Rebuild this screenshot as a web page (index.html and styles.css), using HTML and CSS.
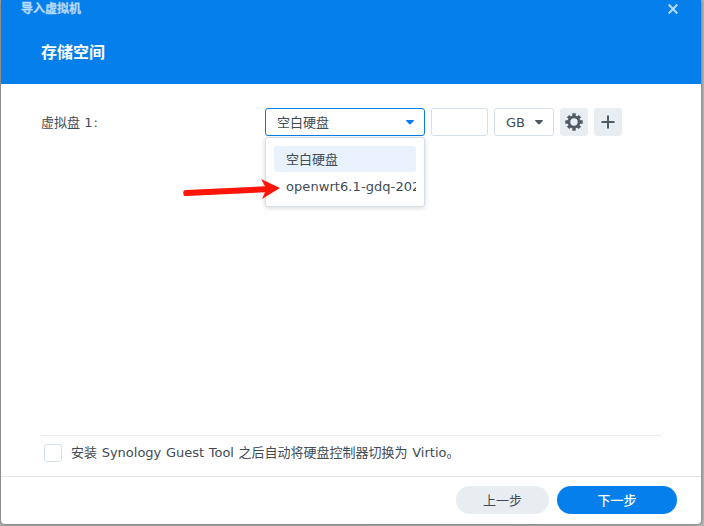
FILE: index.html
```html
<!DOCTYPE html>
<html lang="zh-CN">
<head>
<meta charset="utf-8">
<title>导入虚拟机</title>
<link rel="stylesheet" href="styles.css">
</head>
<body>
<div class="window">
  <header class="header">
    <div class="titlebar">
      <span class="window-title">导入虚拟机</span>
      <svg class="close" width="12" height="12" viewBox="0 0 12 12"><path d="M1.7 1.5 10.3 10.5M10.3 1.5 1.7 10.5"/></svg>
    </div>
    <h1 class="step-title">存储空间</h1>
  </header>
  <main class="content">
    <div class="disk-row">
      <label class="disk-label">虚拟盘 1<span class="colon">:</span></label>
      <div class="combo disk-combo">
        <span>空白硬盘</span>
        <svg class="caret" width="8" height="5" viewBox="0 0 8 5"><path d="M.3 0h7.400q.5.500 0 1L5 3.900Q4 4.800 3 3.900L.3 1Q-.2.500.3 0Z"/></svg>
        <ul class="menu">
          <li class="option selected">空白硬盘</li>
          <li class="option file-name">openwrt6.1-gdq-2024</li>
        </ul>
      </div>
      <div class="size-input"></div>
      <div class="combo unit-combo">
        <span>GB</span>
        <svg class="caret" width="8" height="5" viewBox="0 0 8 5"><path d="M.3 0h7.400q.5.500 0 1L5 3.900Q4 4.800 3 3.900L.3 1Q-.2.500.3 0Z"/></svg>
      </div>
      <div class="icon-button">
        <svg width="18" height="18" viewBox="-9 -9 18 18">
          <circle class="gear-ring" r="5.100"/>
          <path class="gear-teeth" d="M0-6V-8.700M0 6V8.700M-6 0H-8.700M6 0H8.700M4.100-4.100 5.900-5.900M-4.100-4.100-5.900-5.900M4.100 4.100 5.900 5.900M-4.100 4.100-5.900 5.900"/>
        </svg>
      </div>
      <div class="icon-button">
        <svg width="14" height="14" viewBox="0 0 14 14"><path class="plus" d="M7 .5v13M.5 7h13"/></svg>
      </div>
    </div>
    <div class="option-row">
      <span class="checkbox"></span>
      <span class="option-text">安装 Synology Guest Tool 之后自动将硬盘控制器切换为 Virtio。</span>
    </div>
  </main>
  <footer class="footer">
    <div class="button back">上一步</div>
    <div class="button next">下一步</div>
  </footer>
</div>
<svg class="pointer-arrow" width="100" height="24" viewBox="0 0 100 24">
  <path class="shaft" d="M4.200 15 84 11.200"/>
  <path d="M79 1 98 10 80 21 84.500 11Z"/>
</svg>
</body>
</html>
```
FILE: styles.css
```css
* { box-sizing: border-box; }
body {
  margin: 0;
  height: 526px;
  overflow: hidden;
  padding: 0 3px 2px 1px;
  background: linear-gradient(90deg, #b3b3b3 0 50%, #bababa);
  font: 13px/20px "DejaVu Sans", "Noto Sans CJK SC", sans-serif;
  color: #414b55;
}
.window {
  height: 524px;
  display: flex;
  flex-direction: column;
  background: #fff;
  border-radius: 0 0 4px 4px;
  box-shadow: 0 0 4px rgba(0, 0, 0, .5);
}
.header { height: 84px; background: #057feb; color: #fff; }
.titlebar {
  display: flex;
  justify-content: space-between;
  height: 20px;
  padding: 0 22px 0 20px;
  color: #b4d9f9;
}
.window-title { font-size: 12px; line-height: 18px; font-weight: 700; -webkit-text-stroke: .3px #b4d9f9; }
.close { margin-top: 3px; fill: none; stroke: #b4d9f9; stroke-width: 2; }
.step-title { margin: 21px 0 0 40px; font-size: 16px; line-height: 24px; font-weight: 700; }
.content {
  flex: 1;
  display: flex;
  flex-direction: column;
  justify-content: space-between;
  padding: 24px 40px 0;
}
.disk-row { display: flex; height: 28px; align-items: center; }
.disk-label { width: 224px; padding-top: 2px; }
.colon { margin-left: 1px; }
.combo {
  position: relative;
  display: flex;
  align-items: center;
  justify-content: space-between;
  height: 28px;
  padding: 0 10px 0 11px;
  border: 1px solid #d4dfe9;
  border-radius: 3px;
}
.combo > span { padding-top: 2px; }
.disk-combo { width: 160px; margin-right: 6px; border-color: #057feb; }
.disk-combo > .caret { fill: #057feb; }
.unit-combo { width: 60px; margin: 0 6px; }
.caret { fill: #505a64; }
.size-input { width: 57px; height: 28px; border: 1px solid #d4dfe9; border-radius: 3px; }
.icon-button {
  display: grid;
  place-items: center;
  width: 28px;
  height: 28px;
  margin-right: 6px;
  border-radius: 3px;
  background: #e8edf2;
}
.gear-ring { fill: none; stroke: #505a64; stroke-width: 2.800; }
.gear-teeth { stroke: #505a64; stroke-width: 3.400; }
.plus { fill: none; stroke: #505a64; stroke-width: 2; }
.menu {
  position: absolute;
  top: 28px;
  left: -1px;
  width: 160px;
  height: 70px;
  margin: 0;
  padding: 8px;
  list-style: none;
  background: #fff;
  border: 1px solid #d4dfe9;
  border-radius: 3px;
  box-shadow: 0 1px 5px rgba(0, 0, 0, .16);
}
.option {
  height: 26px;
  padding-left: 12px;
  line-height: 28px;
  overflow: hidden;
  white-space: nowrap;
  border-radius: 3px;
}
.file-name { line-height: 30px; letter-spacing: .07px; }
.selected { background: #e9f1fc; }
.option-row {
  display: flex;
  align-items: center;
  height: 41px;
  width: 620px;
  padding: 0 0 7px 3px;
  border-top: 1px solid #e9ebed;
}
.option-text { word-spacing: .5px; }
.checkbox { width: 18px; height: 18px; margin-right: 9px; border: 1px solid #d4dfe9; border-radius: 3px; }
.footer {
  display: flex;
  justify-content: flex-end;
  gap: 8px;
  height: 48px;
  padding: 9px 24px 0 0;
  border-top: 1px solid #e3e5e7;
}
.button { height: 28px; border-radius: 14px; line-height: 30px; text-align: center; }
.back { width: 93px; background: #e8edf2; }
.next { width: 120px; background: #057feb; color: #fff; font-weight: 500; }
.pointer-arrow { position: absolute; left: 182px; top: 178px; fill: #ff1608; }
.shaft { stroke: #ff1608; stroke-width: 6; stroke-linecap: round; }
```
